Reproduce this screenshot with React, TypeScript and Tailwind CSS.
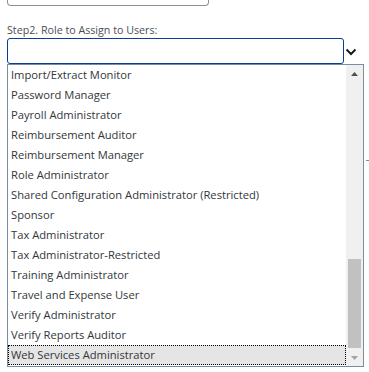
import React from "react";

const roles = [
  "Import/Extract Monitor",
  "Password Manager",
  "Payroll Administrator",
  "Reimbursement Auditor",
  "Reimbursement Manager",
  "Role Administrator",
  "Shared Configuration Administrator (Restricted)",
  "Sponsor",
  "Tax Administrator",
  "Tax Administrator-Restricted",
  "Training Administrator",
  "Travel and Expense User",
  "Verify Administrator",
  "Verify Reports Auditor",
  "Web Services Administrator",
];

export default function App() {
  return (
    <div
      className="relative w-[369px] h-[372px] bg-white overflow-hidden text-[#32363a]"
      style={{ fontFamily: '"Segoe UI", "Open Sans", "Noto Sans", sans-serif' }}
    >
      <div className="ml-[7px] w-[202px] h-[6px] border border-t-0 border-[#89919a] rounded-b-[4px]" />
      <div className="ml-[7px] mt-[16px] text-[10.7px] leading-[16px] text-[#4a4f55]">
        Step2. Role to Assign to Users:
      </div>
      <div className="flex items-center">
        <div className="ml-[7px] w-[337px] h-[26px] border border-[#0b3c93] rounded-[3px] bg-white" />
        <svg width="12" height="8" viewBox="0 0 12 8" className="ml-[1px] mt-[1px]">
          <polyline points="1.5,1.5 6,6 10.5,1.5" fill="none" stroke="#1a1a1a" strokeWidth="2" />
        </svg>
      </div>
      <div className="ml-[7px] w-[357px] h-[303px] border border-[#7a8ea3] flex bg-white">
        <div className="flex-1 flex flex-col">
          {roles.map((r, i) => {
            const sel = i === roles.length - 1;
            return (
              <div
                key={r}
                className={
                  "h-[20px] flex items-center text-[11.2px] whitespace-nowrap " +
                  (sel ? "bg-[#e5e5e5] border border-dotted border-black pl-[2px]" : "pl-[3px]")
                }
              >
                {r}
              </div>
            );
          })}
        </div>
        <div className="w-[17px] bg-[#f0f0f0] flex flex-col items-center">
          <div className="h-[17px] flex items-center justify-center">
            <svg width="7" height="4" viewBox="0 0 7 4">
              <polygon points="0,4 7,4 3.5,0" fill="#505050" />
            </svg>
          </div>
          <div className="flex-1 flex flex-col w-full">
            <div className="h-[177px]" />
            <div className="mx-[2px] h-[89px] bg-[#c1c1c1]" />
          </div>
          <div className="h-[17px] flex items-center justify-center">
            <svg width="7" height="4" viewBox="0 0 7 4">
              <polygon points="0,0 7,0 3.5,4" fill="#a3a3a3" />
            </svg>
          </div>
        </div>
      </div>
      <div className="absolute left-[366px] top-[160px] w-[3px] h-[1px] bg-[#7a8ea3]" />
    </div>
  );
}
